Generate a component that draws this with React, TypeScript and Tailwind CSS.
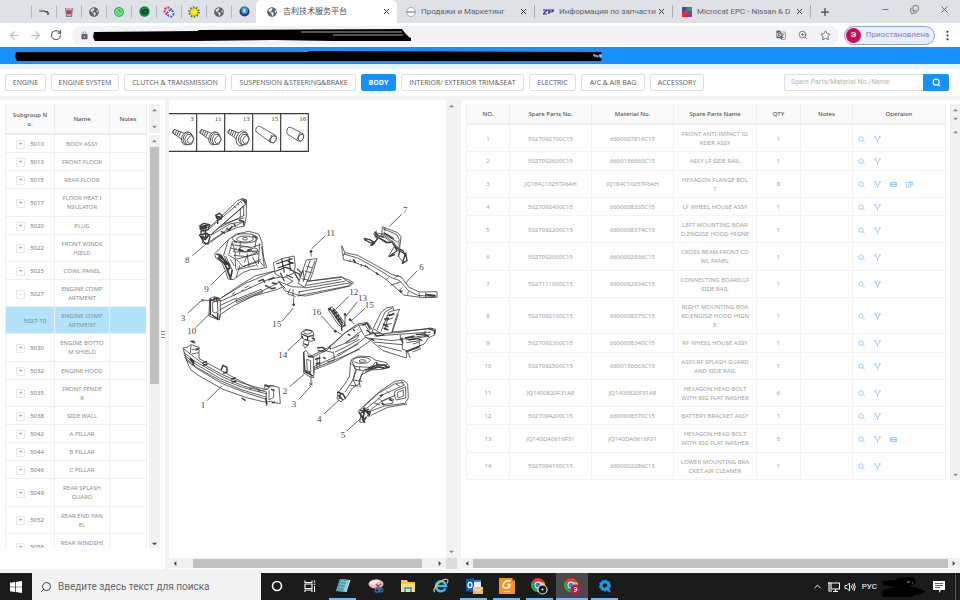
import React, { useState } from 'react';
import { ArrowLeft, ArrowRight, ChevronUp, Copy, EllipsisVertical, Minus, Plus, RotateCw, Search, Star, X, ZoomIn } from 'lucide-react';
import { FaGlobeAmericas, FaWhatsapp } from 'react-icons/fa';
import { MdLock, MdGTranslate } from 'react-icons/md';

interface Subgroup {
  no: string;
  name: string;
  open?: boolean;
  child?: boolean;
}

interface Part {
  partNo: string;
  materialNo: string;
  name: string;
  qty: number;
  actions: number;
}

const CATEGORIES = [
  { label: 'ENGINE', width: 'w-[41px]' },
  { label: 'ENGINE SYSTEM', width: 'w-[68px]' },
  { label: 'CLUTCH & TRANSMISSION', width: 'w-[102px]' },
  { label: 'SUSPENSION &STEERING&BRAKE', width: 'w-[125px]' },
  { label: 'BODY', width: 'w-[35px]' },
  { label: 'INTERIOR/ EXTERIOR TRIM&SEAT', width: 'w-[123px]' },
  { label: 'ELECTRIC', width: 'w-[47px]' },
  { label: 'A/C & AIR BAG', width: 'w-[64px]' },
  { label: 'ACCESSORY', width: 'w-[54px]' },
];

const SUBGROUPS: Subgroup[] = [
  { no: '5010', name: 'BODY ASSY' },
  { no: '5013', name: 'FRONT FLOOR' },
  { no: '5015', name: 'REAR FLOOR' },
  { no: '5017', name: 'FLOOR HEAT I\nNSULATOR' },
  { no: '5020', name: 'PLUG' },
  { no: '5022', name: 'FRONT WINDS\nHIELD' },
  { no: '5025', name: 'COWL PANEL' },
  { no: '5027', name: 'ENGINE COMP\nARTMENT', open: true },
  { no: '5027-10', name: 'ENGINE COMP\nARTMENT', child: true },
  { no: '5030', name: 'ENGINE BOTTO\nM SHIELD' },
  { no: '5032', name: 'ENGINE HOOD' },
  { no: '5035', name: 'FRONT FENDE\nR' },
  { no: '5038', name: 'SIDE WALL' },
  { no: '5042', name: 'A PILLAR' },
  { no: '5044', name: 'B PILLAR' },
  { no: '5046', name: 'C PILLAR' },
  { no: '5049', name: 'REAR SPLASH\nGUARD' },
  { no: '5052', name: 'REAR END PAN\nEL' },
  { no: '5058', name: 'REAR WINDSHI\nELD' },
];

const PARTS: Part[] = [
  { partNo: '5027092700C15', materialNo: '6600007816C15', name: 'FRONT ANTI-IMPACT GI\nRDER ASSY', qty: 1, actions: 2 },
  { partNo: '5027092600C15', materialNo: '6600156660C15', name: 'ASSY LF SIDE RAIL', qty: 1, actions: 2 },
  { partNo: 'JQ184C1025TF6AH', materialNo: 'JQ184C1025TF6AH', name: 'HEXAGON FLANGE BOL\nT', qty: 8, actions: 4 },
  { partNo: '5027092400C15', materialNo: '6600008335C15', name: 'LF WHEEL HOUSE ASSY', qty: 1, actions: 2 },
  { partNo: '5027092200C15', materialNo: '6600008374C15', name: 'LEFT MOUNTING BOAR\nD.ENGIGE HOOD HIGNE', qty: 1, actions: 2 },
  { partNo: '5027092000C15', materialNo: '6600002936C15', name: 'CROSS BEAM,FRONT CO\nWL PANEL', qty: 1, actions: 2 },
  { partNo: '5027111000C15', materialNo: '6600062934C15', name: 'CONNECTING BOARD,LF\nSIDE RAIL', qty: 1, actions: 2 },
  { partNo: '5027092100C15', materialNo: '6600008375C15', name: 'RIGHT MOUNTING BOA\nRD,ENGIGE HOOD HIGN\nE', qty: 1, actions: 2 },
  { partNo: '5027092300C15', materialNo: '6600008340C15', name: 'RF WHEEL HOUSE ASSY', qty: 1, actions: 2 },
  { partNo: '5027092500C15', materialNo: '6600156663C15', name: 'ASSY,RF SPLASH GUARD\nAND SIDE RAIL', qty: 1, actions: 2 },
  { partNo: 'JQ1400820F31A8', materialNo: 'JQ1400820F31A8', name: 'HEXAGON HEAD BOLT\nWITH BIG FLAT WASHER', qty: 6, actions: 2 },
  { partNo: '5027094200C15', materialNo: '6600008370C15', name: 'BATTERY BRACKET ASSY', qty: 1, actions: 2 },
  { partNo: 'JQ140DA0616F31', materialNo: 'JQ140DA0616F31', name: 'HEXAGON HEAD BOLT\nWITH BIG FLAT WASHER', qty: 5, actions: 3 },
  { partNo: '5027094100C15', materialNo: '6600002286C15', name: 'LOWER MOUNTING BRA\nCKET,AIR CLEANER', qty: 1, actions: 2 },
];

// ---------- Browser chrome ----------

const Globe = () => <FaGlobeAmericas className="size-[10px] text-[#5f6368]" />;

const PinnedIcons: React.ReactNode[] = [
  <svg viewBox="0 0 10 10" className="size-[10px]"><path d="M0 4h5l4 1v3" stroke="#333" strokeWidth="1" fill="none" /><path d="M6 5h3v3" stroke="#555" fill="none" /><path d="M0 3h3" stroke="#c99" /></svg>,
  <svg viewBox="0 0 10 10" className="size-[10px]"><path d="M1 1h8l-1 9H2z" fill="#8b7a86" /><path d="M2 1h6v2H2z" fill="#d9a0a0" /><path d="M3 4h4v3H3z" fill="#e22b3c" /><path d="M3 8h4" stroke="#ddd" /></svg>,
  <Globe />,
  <span className="flex size-[10px] items-center justify-center rounded-full bg-[#1fc24c]"><FaWhatsapp className="size-[8px] text-white" /></span>,
  <svg viewBox="0 0 12 12" className="size-[11px]"><circle cx="6" cy="6" r="5.600" fill="#0d8a43" /><path d="M3.500 4v4.500M5.500 4H7q2.300 0 2.300 2.200T7 8.500H5.500z" stroke="#0b3a20" strokeWidth="1.200" fill="none" /></svg>,
  <svg viewBox="0 0 12 12" className="size-[12px]"><circle cx="5" cy="5" r="3.400" fill="none" stroke="#d8304a" strokeWidth="2" strokeDasharray="2 1" /><circle cx="7.500" cy="7.500" r="3" fill="#fff" stroke="#3c5fc0" strokeWidth="2" strokeDasharray="2 1" /></svg>,
  <svg viewBox="0 0 12 12" className="size-[12px]"><circle cx="6" cy="6" r="4.800" fill="none" stroke="#6b6414" strokeWidth="1.800" strokeDasharray="1.500 1.500" /><circle cx="6" cy="6" r="3.800" fill="#f4ea16" stroke="#8f861a" strokeWidth=".6" /></svg>,
  <Globe />,
  <svg viewBox="0 0 12 12" className="size-[11px]"><circle cx="6" cy="6" r="5.500" fill="#1e4668" /><circle cx="6" cy="5" r="3.800" fill="#3c8fd0" /><path d="M4.500 3h2l1 1.500-1 1 1 1.500H4.500z" fill="#cfe6f7" /></svg>,
];

const TABS = [
  {
    title: 'Продажи и Маркетинг',
    icon: <svg viewBox="0 0 10 10" className="size-[10px]"><circle cx="5" cy="5" r="4.500" fill="#fff" stroke="#999" strokeWidth=".8" /><path d="M1 5h8M2 4v2M5 4v2M8 4v2" stroke="#777" strokeWidth=".8" /></svg>,
  },
  {
    title: 'Информация по запчасти',
    icon: <svg viewBox="0 0 11 8" className="h-[8px] w-[11px]"><path d="M0 2h4l-4 4h4M5 2h6L9 4H5M6 2v4" stroke="#2b2f86" strokeWidth="1.200" fill="none" /></svg>,
  },
  {
    title: 'Microcat EPC - Nissan & D',
    icon: <svg viewBox="0 0 10 10" className="size-[10px]"><path d="M0 0h5v5H0z" fill="#3454a0" /><path d="M5 0h5v4H5z" fill="#25a55a" /><path d="M0 5h5v5H0z" fill="#e02a45" /><path d="M5 4h5v6H5z" fill="#8b3a96" /><path d="M3 3h3v3H3z" fill="#b3475e" /></svg>,
  },
];

const TabStrip = () => (
  <div className="flex h-[23px] shrink-0 items-stretch bg-[#dee1e6] pl-[31px] font-['Roboto','Noto_Sans_CJK_SC',sans-serif]">
    {PinnedIcons.map((icon, i) => (
      <div key={i} className="flex w-[25px] items-center">
        <span className="h-[13px] w-px bg-[#b4b8be]" />
        <span className="flex flex-1 justify-center">{icon}</span>
      </div>
    ))}
    <div className="flex w-[141px] items-center rounded-t-md bg-white pr-1.5 pl-[11px]">
      <Globe />
      <span className="ml-1.5 flex-1 truncate text-[8px] text-[#45494d]">吉利技术服务平台</span>
      <button aria-label="Close tab"><X className="size-[9px] text-[#333]" strokeWidth={2.5} /></button>
    </div>
    {TABS.map(tab => (
      <div key={tab.title} className="flex w-[138px] items-center pl-2">
        <span className="flex w-[11px] shrink-0 justify-center">{tab.icon}</span>
        <span className="ml-[5px] w-[98px] overflow-hidden text-[8px] whitespace-nowrap text-[#5f6368]">{tab.title}</span>
        <button aria-label="Close tab" className="ml-auto"><X className="size-[9px] text-[#333]" strokeWidth={2.5} /></button>
        <span className="ml-1.5 h-[13px] w-px bg-[#a9adb3]" />
      </div>
    ))}
    <button aria-label="New tab" className="ml-2"><Plus className="size-[12px] text-[#444]" strokeWidth={2.5} /></button>
    <div className="ml-auto flex items-center gap-5 pr-2.5 pb-1 text-[#555]">
      <button aria-label="Minimize"><Minus className="size-[9px]" /></button>
      <button aria-label="Restore"><Copy className="size-[9px] -scale-y-100" /></button>
      <button aria-label="Close"><X className="size-[11px]" /></button>
    </div>
  </div>
);

const AddressBar = () => (
  <div className="flex h-[24px] shrink-0 items-center bg-white pl-[8px]">
    <button aria-label="Back"><ArrowLeft className="size-[13px] text-[#b5b8bb]" /></button>
    <button aria-label="Forward" className="ml-2"><ArrowRight className="size-[13px] text-[#b5b8bb]" /></button>
    <button aria-label="Reload" className="ml-2"><RotateCw className="size-[12px] text-[#5f6368]" strokeWidth={2.5} /></button>
    <div className="ml-2.5 flex h-[19px] flex-1 items-center rounded-full bg-[#f1f3f4] px-2">
      <MdLock className="size-[9px] text-[#5f6368]" />
      <svg viewBox="0 0 318 13" className="ml-1 h-[13px] w-[318px]">
        <path d="M1 3l104-1V1l204-1 3 4 1 1 3 3 2 1v3H240l-60-1-78 1H2L0 8z" fill="#000" />
        <path d="M208 3h101M240 6h70" stroke="#f1f3f4" strokeWidth=".7" />
      </svg>
      <div className="ml-auto flex items-center gap-3 text-[#5f6368]">
        <button aria-label="Translate"><MdGTranslate className="size-[10px]" /></button>
        <button aria-label="Zoom"><ZoomIn className="size-[10px]" /></button>
        <button aria-label="Bookmark"><Star className="size-[11px]" /></button>
      </div>
    </div>
    <button className="ml-[5px] flex h-[19px] w-[91px] items-center rounded-full border border-[#8f9fd0] bg-[#e8eefb] font-['Roboto',sans-serif] text-[8px] text-[#7386c4]">
      <span className="ml-px flex size-[15px] items-center justify-center rounded-full bg-[#c80f55] font-bold text-white">Э</span>
      <span className="flex-1 text-center">Приостановлена</span>
    </button>
    <button aria-label="Menu" className="mx-[6px]"><EllipsisVertical className="size-[13px] text-[#333]" /></button>
  </div>
);

// ---------- Scrollbars ----------

const ARROWS = {
  up: 'M0 4h6L3 1z',
  down: 'M0 2h6L3 5z',
  left: 'M4 0v6L1 3z',
  right: 'M2 0v6l3-3z',
};

const Arrow = ({ dir, tone = 'text-[#8a8a8a]' }: { dir: keyof typeof ARROWS; tone?: string }) => (
  <svg viewBox="0 0 6 6" className={`size-[5px] shrink-0 ${tone}`}>
    <path d={ARROWS[dir]} fill="currentColor" />
  </svg>
);

const HScroll = ({ thumb }: { thumb: string }) => (
  <div className="flex h-[10px] flex-1 items-center bg-[#f1f1f1] px-1">
    <Arrow dir="left" tone="text-[#444]" />
    <div className={`h-[9px] flex-1 bg-[#c1c1c1] ${thumb}`} />
    <Arrow dir="right" tone="text-[#444]" />
  </div>
);

// ---------- Subgroup tree ----------

const SubgroupPanel = () => {
  const [selected, setSelected] = useState('5027-10');

  return (
    <section className="flex w-[160px] shrink-0 bg-white pt-1 pb-[21px] pl-[5px]">
      <div className="flex-1 overflow-hidden">
        <table className="h-[457px] w-full table-fixed border-separate border-spacing-0 text-center font-['Noto_Sans',sans-serif] text-[6px] leading-[9px] text-[#777]">
          <colgroup>
            <col className="w-[50px]" />
            <col className="w-[55px]" />
            <col />
          </colgroup>
          <thead>
            <tr className="h-[31px] bg-[#fafafa] text-[#555]">
              <th className="border-r border-b-2 border-l border-[#ececec] pt-0.5 font-medium">Subgroup N<br />o.</th>
              <th className="border-r border-b-2 border-[#ececec] pt-0.5 font-medium">Name</th>
              <th className="border-r border-b-2 border-[#ececec] pt-0.5 font-medium">Notes</th>
            </tr>
          </thead>
          <tbody>
            {SUBGROUPS.map(row => (
              <tr key={row.no} onClick={() => setSelected(row.no)} className={row.no === selected ? 'bg-[#b3e2fd]' : 'bg-white'}>
                <td className="border-r border-b border-l border-[#efefef] pt-[5px] pb-[3px]">
                  {row.child ? (
                    <span className="ml-2.5">{row.no}</span>
                  ) : (
                    <span className="flex items-center justify-center gap-[5px]">
                      <button aria-label={`Toggle ${row.no}`} className="flex size-[9px] items-center justify-center rounded-[1px] border border-[#e8e8e8] text-[#777]">
                        {row.open ? '-' : '+'}
                      </button>
                      {row.no}
                    </span>
                  )}
                </td>
                <td className="border-r border-b border-[#efefef] pt-[5px] pb-[3px] whitespace-pre text-[#8c8c8c]">{row.name}</td>
                <td className="border-r border-b border-[#efefef]" />
              </tr>
            ))}
          </tbody>
        </table>
      </div>
      <div className="ml-0.5 flex w-[11px] flex-col items-center">
        <div className="flex h-[29px] w-full flex-col items-center justify-between bg-[#f1f1f1] py-1">
          <Arrow dir="up" />
          <Arrow dir="down" />
        </div>
        <div className="mt-0.5 flex w-full flex-1 flex-col items-center bg-[#f1f1f1] pt-1 pb-0.5">
          <Arrow dir="up" />
          <div className="mt-[3px] h-[237px] w-[9px] bg-[#c1c1c1]" />
          <div className="mt-auto"><Arrow dir="down" tone="text-[#444]" /></div>
        </div>
      </div>
    </section>
  );
};

// ---------- Exploded view ----------

const LABELS: [string, number, number][] = [
  ['3', 76, 63], ['11', 149, 63], ['13', 233, 63], ['15', 319, 63], ['16', 403, 63],
  ['8', 60, 490], ['7', 714, 340], ['11', 484, 408], ['6', 763, 510], ['9', 118, 575],
  ['3', 47, 663], ['10', 67, 701], ['15', 322, 682], ['12', 553, 586], ['13', 579, 603],
  ['15', 599, 625], ['16', 442, 646], ['14', 340, 775], ['1', 107, 923], ['2', 353, 882],
  ['3', 380, 920], ['4', 456, 965], ['5', 527, 1015],
];

const Bolt = ({ x, washer }: { x: number; washer?: boolean }) => (
  <g transform={`translate(${x} 0)`}>
    <path d="M6 97l7-9 42 17-8 22z" />
    <path d="M13 88l-4 12m11-9l-6 14m12-12l-6 14m12-11l-6 14" strokeWidth="2.600" />
    <ellipse cx="50" cy="115" rx={washer ? 17 : 15} ry={washer ? 23 : 20} transform="rotate(20 50 115)" />
    <ellipse cx="53" cy="115" rx="13" ry="18" transform="rotate(20 53 115)" />
    <path d="M44 117l8-14 14 1 6 13-8 16-15 1z" />
    <path d="M57 111l8-5 6 11-5 12-10 1-5-9z" />
  </g>
);

const PartsDrawing = () => (
  <svg viewBox="12 0 831 1374" className="h-[458px] w-[277px]" fill="none" stroke="#3a3a3a" strokeWidth="2.400" strokeLinejoin="round">
    {/* fastener strip */}
    <path d="M12 41h418v113H12M95 41v113M179 41v113M263 41v113M347 41v113" strokeWidth="3.500" />
    <g fill="#fff">
      <Bolt x={15} />
      <Bolt x={97} />
      <Bolt x={181} washer />
      <path d="M275 82q4-6 12-2l46 27q5 6-1 15t-14 6l-44-32q-5-5 1-14zM321 104l-9 21M326 105l-9 21" />
      <ellipse cx="325" cy="118" rx="8" ry="11" transform="rotate(25 325 118)" />
      <path d="M368 84q4-5 11-1l35 18q5 5 0 15t-14 7l-32-20q-6-6 0-19zM404 99l-8 20M409 101l-8 20" />
      <ellipse cx="408" cy="113" rx="7" ry="11" transform="rotate(25 408 113)" />
    </g>

    {/* 8: left hinge mounting board */}
    <g>
      <path d="M232 296l12 3v50l-6 30-20 3-44 18-44 31-18-2 2-23 14-18z" fill="#fff" />
      <path d="M218 302l14-6 12 6-2 12-104 90-20-2-2-14 24-12z" fill="#fff" />
      <path d="M230 302L126 392M242 312L140 402M160 384l78-38M226 326v26M236 320v28M176 372l40-14 22-4M138 406l56-34 42-8M134 425l50-34 52-26M206 318l8 6M217 310l6 6M226 304l6 6" />
      <path d="M104 378l12-8 18 4-4 15-20 4zM108 393v20l14 7M122 388v32M103 405l24-5 8 10-6 22-10-3zM152 346l12-6 8 8-4 10-12-2zM158 358v14M231 299l10 6M184 384l8 8 10-14M168 394l12 6M206 370l6 10M222 360l14 4v12" strokeWidth="4" />
      <path d="M106 381l24-6M104 388l22-6M108 410l14 4M123 415l8-10M153 349l14 4M238 302l4 8" strokeWidth="6" />
    </g>

    {/* 9: left wheel house */}
    <g>
      <path d="M149 461l40-41 26-18 36-8 30 8 9 22 6 48 9 30-22 5-26 2-22 8-30 22-16-2-8-26-12-26-16-10z" fill="#fff" />
      <ellipse cx="240" cy="415" rx="38" ry="14" />
      <ellipse cx="240" cy="417" rx="25" ry="9" />
      <ellipse cx="240" cy="416" rx="8" ry="4" />
      <ellipse cx="240" cy="448" rx="18" ry="8" />
      <ellipse cx="268" cy="450" rx="10" ry="6" />
      <path d="M190 420l-14 46 18 38M202 424l-10 38M202 428l8 28 66-3M210 456l2 50M188 464l24 14 70-18M216 480l18 20 54-22M234 500l50-16 12 14M246 460l6 40M262 470l16 30M224 496l-10 36M284 430l-4 62M274 412l-4 30M226 424l-2 40M238 488l8-22M216 442l-12 14M290 440l8 60M212 510l30-14M182 468l20 42M200 434l60 8 26-8M196 444l30 8M206 466l40 4 36-16M196 478l12 20M222 508l50-12" />
      <path d="M154 462l14 4 12 20 10 6M158 472l20 18 12 24M162 468l30 24M176 490l16 4 2 12-10 2M202 510l-6 26M186 508l12 30M220 448l16 5M246 452l10-3M216 426l-10-2M262 408l14 6" strokeWidth="5" />
    </g>

    {/* 7: connecting board */}
    <g>
      <path d="M652 380l46 18 10 12-4 34-16-10-26-20-12-4z" fill="#fff" />
      <path d="M654 386l42 18 6 14v20M660 394v-12M652 400l46 26M632 398l18 4 36 24 10 20 20 14M634 408l40 22M636 392l-10 8 8 16M640 416l-26 22M688 440l-18 30M698 452l20 8M700 468l16 22" />
      <path d="M596 415l18 4 14 8-10 2-20-10M628 395l12 12 16 4M630 402l8 14-16 20M616 436l14-6M656 398l30 18M640 412l24 16 20-2M684 430l12 22-24 18M692 442l22 10 6 14-8 24 14-8-4-24M706 446l-6 24M672 470l18-6" strokeWidth="4" />
    </g>

    {/* 6: front cowl cross beam */}
    <g>
      <path d="M530 437l10 21 38 8 44 24 60 34 26 6 24 32 32 14 52-1v17l-44 1-56-8-38-34-14-12-58-38-38-14-32-8-4-22z" fill="#fff" />
      <path d="M536 462l42 12 48 26 52 32 26 10 26 30 28 14 54 4M555 478v8M606 498l4 10M590 492l-2 8M634 516l4 8M664 538l8-5M676 556l30-10M702 572l10-10M728 584l2-10M762 578l2 14M782 578v16M540 458l-6 10M690 532l12-6" />
      <path d="M564 478l8 10M600 500l4-3M634 520l6 4M704 572l8 4M782 584l30 3" strokeWidth="5" />
    </g>

    {/* 10: left side rail */}
    <g transform="translate(0 510)">
      <path d="M134 86l14-6 18 6 52-36 52-32 54-14 34 14 26 16-46 24-72 20-62 30-38 26-4 16-30-12z" fill="#fff" />
      <path d="M143 96l14-3 2 32-8 4-8-4zM134 86l14 8 18-2M148 81v12M166 90v40l-3 20M166 94l80-36 60-28 44-10M164 120l50-28 80-30 50-26M166 106l48-22M213 88l76-30 4 8-78 31zM168 84l74-44 90-38M200 74l10-8M204 78l10-7M240 54l12-7M250 56l8-6M228 64l10-6" />
      <path d="M138 92l18-9 8 8M140 134l20 14M152 86l6 8M136 88v48M158 128v20M280 34l14-6 6 10M310 30l18-8M320 38l16 4M300 46l20 10 12-3" strokeWidth="4.500" />
      <path d="M325-22l26-12 36-8 4 30-6 22-32 14-22-12z" fill="#fff" />
      <path d="M333-18l50-16M338-6l46-16M332 4l30-12 18 6M350-34l8 42M372-38l4 40M346 8l12 26M364 14l20 10M368-26l18 6M378 0l24 12M396-4l30 30M388 8l18 30M402 10l16 36" strokeWidth="3.500" />
      <path d="M400 40l24-70 12-2 20-2-12 40-16 44-6 4z" fill="#fff" />
      <path d="M414 36l22-66M426 38l24-66M410 26l20 4M420 4l20 4M424-12l18 6M404 20l10-20 4 30" />
      <path d="M340 34l40 16 40 2 6-18 104-12 22 8 14 8-10 10-54 12-80 18-22-2-40-14z" fill="#fff" />
      <path d="M400 66l158-28M404 76l146-28M426 34l104-14 12 10M424 46l106-18M420 54l120-20M376 56l-8 16 24 8M384 58v20M404 64l-4 16M344 38l18 18M540 30l20 10-12 8" />
      <path d="M438-40v-16M434-56h8M386 82v20" />
      <circle cx="438" cy="-56" r="3" fill="#333" />
      <circle cx="386" cy="104" r="3" fill="#333" />
      <path d="M112 91h22M108 87l7 8M115 87l-7 8" />
    </g>

    <g transform="translate(0 510)">
      {/* 1: anti-impact girder */}
      <path d="M54 234l12-2 12-8 24 8v34l34 18 40 22 44 24 44 22 26 10 20-6 4-10 28 6 4 48-22-2-4-4-22 2-50-12-74-26-74-42-22-16-10-20z" fill="#fff" />
      <path d="M56 236l30 24 32 24 50 28 60 26 54 16 26 4M55 246l32 26 84 48 64 28 70 18M56 254l36 28 74 44 66 26 74 20M58 262l40 32 68 38 66 28 74 22M62 270l38 28 70 42 66 26 68 22M78 226l-2 24M80 240l24-6M80 252l22-4M76 214l10-2 4 8M304 366v42M312 360v30l14-8v-26M298 354l4-10 14 6 10-4" />
      <path d="M78 214l12 4M76 264l10 10-2 12M92 240l8-3M112 280l14-6M114 286l14-4M168 300l6-14 12 6v14l-12 4M198 328l14-5M200 336l14-3M230 384l12 8M254 356l4 2M280 362l4 2M298 345l16 6M318 358l10 4M320 398l10-2M302 384l4 20M74 268l14 14" strokeWidth="4.500" />

      {/* 14: air cleaner bracket */}
      <path d="M408 188l14-10 20 4 4 10-2 14 6 4-10 4-8-2-2 14-10 8-6-10 4-16-8-6z" fill="#fff" />
      <ellipse cx="428" cy="186" rx="12" ry="6" />
      <path d="M410 192l18 8 18-4M428 200v12M420 208l10 4M418 222l12 4M440 204l10 4M412 198v8" strokeWidth="4" />

      {/* 12: battery bracket with bolts */}
      <path d="M490 116l10-5 10 8 28 38 2 10-8 5-12-8-30-44z" fill="#fff" />
      <path d="M494 114l34 50M500 124l10-5M504 132l12-6M510 142l12-6M516 150l12-4M504 118l30 44M490 116l10 6M530 162v20M534 168l8-2" strokeWidth="4.500" />
      <path d="M540 134v30M555 149l14 14M512 182l18 12" />
      <circle cx="540" cy="133" r="3" fill="#333" />
      <circle cx="555" cy="149" r="3" fill="#333" />
      <circle cx="511" cy="184" r="3" fill="#333" />

      {/* 2: right splash guard and side rail */}
      <path d="M416 246l8-4 8 12 14 6 40-20 54-52 38-26 30-5 16 26-36 30-60 40-80 36-2 34-10-2-20-12z" fill="#fff" />
      <path d="M425 268l12 4v34l-10-4zM446 260v50M456 262v32M464 256v32M450 294l54-22 80-34M446 300l66-26 70-38 34-24M430 262l58-28 56-48 36-20 22-4M480 242l26 6 2 22-22 6M500 236l40-16 50-38M510 246l30-14 44-24M516 254l64-32M544 216l38-22-8 14-30 12zM580 164l16 30M596 160l18 24" />
      <path d="M416 246l4 60 24 12M428 258l16 4M420 300l10 8M456 234l18-2 8 8M458 242l22 2M450 268l16-4M452 282l14-5M474 262l8 4M492 230l6 8M548 192l8 5M564 178l6 5M592 166l14-6 10 18M604 180l16 12M432 304l8 14" strokeWidth="4" />
      <path d="M598 198l28-8 72-2 98-14 16 4-2 16-20 10-12 18-52 20-2 22-70-22-36-30z" fill="#fff" />
      <path d="M624 190l180-14M628 198l170-12M604 204l80 8 110-18M626 216l86 8M640 226l70 18M712 202v36l14 4 10 22M722 210l70-12M724 218l40-6v20l-36 12M744 222l20-6M706 194v18M780 182v20M742 246l26-10" />
      <path d="M622 186l14 12 22-4M720 204l28-6M730 210l30-4 12 6M752 194l26-2 14 8M790 176l18 6v10M708 204l6 16M722 246l40-16M616 206l12 6" strokeWidth="4" />
      <path d="M624 176l24-48 16-14 20-4 2 12 18-4-10 22-14 48-28 4z" fill="#fff" />
      <path d="M636 180l24-54 22-12M648 184l24-58 14-4M660 152l24-8M654 166l26-6M682 186l18-54M664 138l24-8M668 146l-8 34" />
      <path d="M658 148l14-4M654 162l16 8M672 136l16-4M656 174l14 6" strokeWidth="5" />

      {/* 4: right wheel house */}
      <path d="M556 280l4-12 22-10 34 2 14 10 34 8 10 12-24 8-32 2-28 14-8 28-20 12-16 26-18 16-12-10 2-16 20-26 16-26z" fill="#fff" />
      <ellipse cx="590" cy="271" rx="26" ry="9" />
      <ellipse cx="592" cy="273" rx="10" ry="4" />
      <path d="M556 280l14 10 50 2 12-16M560 272l12 26-8 32-24 36M572 298l24 4M566 330l26 4M556 346l24 2M574 300l-10 30 10 18M596 302l-14 30 4 20M600 306l60-22M584 290v12M566 284l4 14" />
      <path d="M516 366l18 6 8 14M520 376l14 14M598 300l40-8M610 294l30-10 26 2M650 284l22 8-20 4M634 276l4 10M528 368l-6 18M634 290l24 4" strokeWidth="4.500" />

      {/* 5: right hinge mounting board */}
      <path d="M580 424l16-16 48-44 46-30 24-4 14 12 2 42-10 16-62 8-42 16-22 34-10-2 4-22z" fill="#fff" />
      <path d="M594 412l46-42 52-30 24-2M604 416l54-44 62-28M616 420l36-28 40-16M690 364l32-14v34l-28 6-6-14zM697 368l18-8v18l-16 6zM652 394l20-10 14 4-4 12-30 4zM618 436l50-24 58-10M640 384l10 8M664 362l8 8M692 342l12 6M710 334l6 12M626 398l20 8" />
      <path d="M584 420l30 6M588 428l24-10M594 414l20 22M600 412l-6 34M582 426l14 22 8-6M592 446l8 12M616 422l-4 18M644 378l10-4M650 400l8 4M672 388l10 4" strokeWidth="5" />
      <path d="M438 318v26M433 340l10 6M433 347l10-8" />
    </g>

    {/* leader lines */}
    <path d="M82 467l46-39M710 343l-38 37M480 408l-40 38M757 512l-36 38M138 555l42-42M68 640l40-37M92 683l41-41M350 665l35-41M551 590l-39 38M577 605l-35 45M600 625l-42 38M470 648l41 46M368 752l40-37M126 902l44-44M374 860l44-38M402 898l36-40M477 942l45-42M545 993l45-40" />

    <g fill="#444" stroke="none" fontFamily="'Liberation Serif', serif">
      {LABELS.map(([text, x, y], i) => (
        <text key={i} x={x} y={y} fontSize={i < 5 ? 21 : 27}>{text}</text>
      ))}
    </g>
  </svg>
);

const DrawingPanel = () => (
  <section className="flex w-[288px] shrink-0 flex-col bg-white">
    <div className="flex flex-1 overflow-hidden">
      <div className="flex-1 overflow-hidden"><PartsDrawing /></div>
      <div className="flex w-[11px] flex-col items-center justify-between bg-[#f1f2f2] py-1">
        <Arrow dir="up" />
        <Arrow dir="down" />
      </div>
    </div>
    <div className="flex h-[11px]">
      <HScroll thumb="mr-[15px] ml-[15px]" />
      <div className="w-[11px] bg-[#dcdcdc]" />
    </div>
  </section>
);

// ---------- Parts table ----------

const ACTIONS = [
  { label: 'Search', art: <><circle cx="3" cy="3" r="2.200" /><path d="M4.700 4.700l2 1.600" /></> },
  { label: 'Fork', art: <><circle cx="1.300" cy="1" r=".7" /><circle cx="5.700" cy="1" r=".7" /><path d="M1.500 1.700L3.500 5l2-3.300M3.500 4.500V7" /></> },
  { label: 'Bind', art: <path d="M.5 1.500h6v4h-6zM2 1.500v4M5 1.500v4M1 3.500h5" /> },
  { label: 'Copy', art: <path d="M.5 1.500h4.500v4.500H.5zM2.500 1h4v3M5 3H3v2" /> },
];

const PartsPanel = () => (
  <section className="flex min-w-0 flex-1 flex-col bg-white pt-1">
    <div className="flex flex-1 pl-[5px]">
      <div className="flex-1 pr-1">
        <table className="h-[376px] w-full table-fixed border-separate border-spacing-0 text-center font-['Noto_Sans',sans-serif] text-[6px] leading-[9px] text-[#a0a0a0]">
          <colgroup>
            <col className="w-[44px]" />
            <col className="w-[82px]" />
            <col className="w-[82px]" />
            <col className="w-[83px]" />
            <col className="w-[44px]" />
            <col className="w-[52px]" />
            <col />
          </colgroup>
          <thead>
            <tr className="h-[21px] bg-[#fafafa] text-[#555]">
              {['NO.', 'Spare Parts No.', 'Material No.', 'Spare Parts Name', 'QTY', 'Notes', 'Operaion'].map(title => (
                <th key={title} className="border-r border-b-2 border-[#eeeeee] pt-0.5 font-medium first:border-l">{title}</th>
              ))}
            </tr>
          </thead>
          <tbody>
            {PARTS.map((part, i) => (
              <tr key={part.partNo}>
                <td className="border-r border-b border-l border-[#f3f3f3] pt-[5px] pb-[3px]">{i + 1}</td>
                <td className="border-r border-b border-[#f3f3f3] pt-[5px] pb-[3px]">{part.partNo}</td>
                <td className="border-r border-b border-[#f3f3f3] pt-[5px] pb-[3px]">{part.materialNo}</td>
                <td className="border-r border-b border-[#f3f3f3] pt-[5px] pb-[3px] whitespace-pre">{part.name}</td>
                <td className="border-r border-b border-[#f3f3f3] pt-[5px] pb-[3px]">{part.qty}</td>
                <td className="border-r border-b border-[#f3f3f3]" />
                <td className="border-r border-b border-[#f3f3f3] pt-[5px] pb-[3px]">
                  <div className="flex gap-[9px] pl-[5px]">
                    {ACTIONS.slice(0, part.actions).map(action => (
                      <button key={action.label} aria-label={action.label} className="text-[#86c3fb]">
                        <svg viewBox="0 0 7 7" className="size-[7px]" fill="none" stroke="currentColor" strokeWidth=".8">{action.art}</svg>
                      </button>
                    ))}
                  </div>
                </td>
              </tr>
            ))}
          </tbody>
        </table>
      </div>
      <div className="flex h-[376px] w-[10px] flex-col items-center bg-[#f1f1f1]">
        <div className="flex h-[21px] flex-col justify-center gap-[3px]">
          <Arrow dir="up" />
          <Arrow dir="down" />
        </div>
        <div className="mt-[5px]"><Arrow dir="up" /></div>
        <div className="mt-auto mb-[3px]"><Arrow dir="down" /></div>
      </div>
    </div>
    <div className="flex h-[11px]">
      <HScroll thumb="mx-[3px]" />
    </div>
  </section>
);

// ---------- Taskbar ----------

const Chrome = ({ children }: { children: React.ReactNode }) => (
  <svg viewBox="0 0 18 18" className="size-[18px]">
    <circle cx="8" cy="8" r="7" fill="#e23b30" />
    <path d="M8 8L2 4.500A7 7 0 0 0 8 15z" fill="#2ca24c" />
    <path d="M8 15a7 7 0 0 0 6.500-9.500H8z" fill="#f7c82a" />
    <circle cx="8" cy="8" r="3.400" fill="#fff" />
    <circle cx="8" cy="8" r="2.600" fill="#3b7de0" />
    {children}
  </svg>
);

const APPS: { name: string; running?: boolean; active?: boolean; icon: React.ReactNode }[] = [
  { name: 'Cortana', icon: <svg viewBox="0 0 12 12" className="size-[12px]"><circle cx="6" cy="6" r="4.500" fill="none" stroke="#fff" strokeWidth="1.600" /></svg> },
  { name: 'Task view', icon: <svg viewBox="0 0 12 12" className="size-[12px]" fill="none" stroke="#fff" strokeWidth="1.100"><path d="M1 4h7v4.500H1zM1 .5v2h7v-2M1 12v-2h7v2M10.500 .5v2M10.500 6v6M9.500 4.200h2" /></svg> },
  { name: 'Notepad', running: true, icon: <svg viewBox="0 0 16 16" className="size-[16px]"><path d="M5 1l10 1-4 12-10-1z" fill="#8fc3cf" /><path d="M5 1l7 .7L8 13.500 1 13z" fill="#4fa1b4" /><path d="M6 3l7 1M5 6l7 1M4 9l7 1" stroke="#a4d4dc" strokeWidth=".6" /><path d="M15 2l-4 12" stroke="#e8e8e8" /></svg> },
  { name: 'Snipping tool', icon: <svg viewBox="0 0 16 16" className="size-[16px]"><ellipse cx="8" cy="6" rx="7.500" ry="4.500" fill="#e8b9c0" /><path d="M1 6q3-5 11-4L7 7z" fill="#f7e9ea" /><path d="M8 6l5 6M13 6l-6 5" stroke="#cf3346" strokeWidth="1.200" /><circle cx="13" cy="12" r="1.800" fill="none" stroke="#2870b8" strokeWidth="1.400" /><circle cx="9" cy="12.500" r="1.800" fill="none" stroke="#2870b8" strokeWidth="1.400" /></svg> },
  { name: 'Explorer', icon: <svg viewBox="0 0 16 14" className="h-[14px] w-[16px]"><path d="M1 1h6l1 2h7v10H1z" fill="#f0c445" /><path d="M1 5h14v8H1z" fill="#fbdc79" /><path d="M4 8h8v5H10v-3H6v3H4z" fill="#4ba3dd" /></svg> },
  { name: 'Internet Explorer', icon: <svg viewBox="0 0 16 16" className="size-[16px]" fill="none"><path d="M12.500 10.500A5 5 0 1 1 13 8H4" stroke="#40bdf0" strokeWidth="2.600" /><path d="M2 14Q-1 13 4 7T14 1.500q2 .5 0 4" stroke="#f3c63a" strokeWidth="1.200" /></svg> },
  { name: 'Outlook', running: true, icon: <svg viewBox="0 0 18 16" className="h-[16px] w-[18px]"><path d="M7 2h9v9H7z" fill="#2d8ae0" /><path d="M8 4h8v5H8z" fill="#e9f3fc" /><path d="M1 1l8-1v14l-8-1z" fill="#0b5cad" /><ellipse cx="5" cy="7" rx="2" ry="2.700" fill="none" stroke="#fff" strokeWidth="1.300" /><path d="M8 9h10v7H8z" fill="#f3b96a" /><path d="M8 9l5 4 5-4" stroke="#fff2d8" fill="none" /></svg> },
  { name: 'PDF', running: true, icon: <svg viewBox="0 0 16 16" className="size-[16px]"><path d="M0 0h13l3 3v13H0z" fill="#f29222" /><path d="M13 0v3h3" fill="#a55c10" /><path d="M11.500 3q-5.500-1-7 3T7 10t4-3.500H8" stroke="#fff" strokeWidth="1.500" fill="none" /><path d="M5 13.500h6" stroke="#fce0ba" strokeWidth="1.200" /></svg> },
  { name: 'Chrome', running: true, icon: <Chrome><circle cx="12.500" cy="12.500" r="4.500" fill="#181818" stroke="#ddd" strokeWidth="1.200" /><circle cx="12.500" cy="12.500" r="1" fill="#fff" /></Chrome> },
  { name: 'Chrome profile', running: true, active: true, icon: <Chrome><circle cx="12.500" cy="12.500" r="5" fill="#cb1256" /><path d="M11 10.800q3-1 3 1.700t-3 1.700M11.500 12.500H14" stroke="#fff" strokeWidth=".9" fill="none" /></Chrome> },
  { name: 'Settings', running: true, icon: <svg viewBox="0 0 14 14" className="size-[14px]"><circle cx="7" cy="6.500" r="3.800" fill="none" stroke="#1b9de8" strokeWidth="3" /><circle cx="7" cy="6.500" r="5.300" fill="none" stroke="#1b8ad6" strokeWidth="1.500" strokeDasharray="2 1.500" /><path d="M8 8l4 5" stroke="#1b9de8" strokeWidth="2" /></svg> },
];

const Taskbar = () => (
  <footer className="flex h-[27px] shrink-0 bg-[#1b1b1b] font-['Roboto',sans-serif] text-white">
    <button aria-label="Start" className="flex w-[32px] items-center justify-center">
      <svg viewBox="0 0 12 12" className="size-[12px]" fill="#fff"><path d="M0 1.800l5-.8v4.700H0zM5.700.9L12 0v5.700H5.700zM0 6.300h5V11l-5-.8zM5.700 6.300H12V12l-6.300-.9z" /></svg>
    </button>
    <label className="flex w-[229px] items-center bg-[#f2f2f2] pl-2">
      <Search className="size-[12px] -scale-x-100 text-[#444]" strokeWidth={2} />
      <input aria-label="Поиск" placeholder="Введите здесь текст для поиска" className="ml-1.5 min-w-0 flex-1 bg-transparent text-[10px] text-[#333] outline-none placeholder:text-[#666]" />
    </label>
    <div className="flex w-[360px]">
      {APPS.map(app => (
        <button key={app.name} aria-label={app.name} className={`flex flex-1 flex-col items-center ${app.active ? 'bg-[#4a4a4a]' : ''}`}>
          <span className="flex flex-1 items-center">{app.icon}</span>
          <span className={`h-[2px] ${app.active ? 'w-full' : 'w-[27px]'} ${app.running ? 'bg-[#76b9ed]' : ''}`} />
        </button>
      ))}
    </div>
    <div className="ml-auto flex items-center pr-1">
      <ChevronUp className="size-[11px]" />
      <svg viewBox="0 0 12 12" className="ml-[5px] size-[12px]" fill="none" stroke="#fff" strokeWidth="1.100"><path d="M3 2h8.500v6H3zM5 10.500h5M7.500 8v2.500M1 1v5M0 2h2.500M1 6v4h3" /></svg>
      <svg viewBox="0 0 12 12" className="ml-1 size-[12px]" fill="none" stroke="#fff" strokeWidth=".9"><path d="M1 4.500h2L5.500 2v8L3 7.500H1zM7 4.500q1 1.500 0 3M8.500 3q2 3 0 6M10 2q2.500 4 0 8" /></svg>
      <span className="ml-[6px] text-[8px]">РУС</span>
      <svg viewBox="0 0 46 20" className="ml-1 h-[20px] w-[46px]"><path d="M1 4l14-1 2-2 15-1 3 3-1 4-6 2 8 2 9 3-4 3-7 1-4 2H1l1-7 12-3L2 8z" fill="#000" /><path d="M26 5h3M31 6h1" stroke="#bbb" strokeWidth=".8" /></svg>
      <svg viewBox="0 0 12 12" className="ml-[6px] size-[12px]"><path d="M0 0h12v9H8l-2 3V9H0z" fill="#fff" /><path d="M2 2.500h8M2 4.500h8M2 6.500h5" stroke="#333" strokeWidth=".8" /></svg>
      <span className="ml-2.5 h-[27px] w-px bg-[#555]" />
    </div>
  </footer>
);

const App: React.FC = () => {
  const [category, setCategory] = useState('BODY');

  return (
    <div className="flex h-screen flex-col overflow-hidden bg-[#f1f3f5] font-['Open_Sans','Noto_Sans_CJK_SC',sans-serif]">
      <TabStrip />
      <AddressBar />

      {/* Site header */}
      <header className="h-[17px] shrink-0 bg-[#1890ff] pt-1 pl-[15px]">
        <svg viewBox="0 0 588 10" className="h-[10px] w-[588px]">
          <path d="M1 1h292l1-1 292 1 1 2-5 2 5 3-1 2H2L0 6z" fill="#000" />
          <path d="M578 4h2v2M582 4v2.500M584 4h2v2" stroke="#cfe6ff" strokeWidth="1.200" fill="none" />
        </svg>
      </header>

      {/* Categories and search */}
      <nav className="flex h-[32px] shrink-0 items-center gap-[5px] border-t-[5px] border-[#e8f4ff] bg-white pr-[11px] pl-[5px]">
        {CATEGORIES.map(({ label, width }) => (
          <button
            key={label}
            onClick={() => setCategory(label)}
            className={`h-[17px] shrink-0 rounded-[2px] border text-[7px] leading-[9px] whitespace-nowrap ${width} ${
              category === label
                ? 'border-[#1890ff] bg-[#1890ff] font-bold text-white'
                : 'border-[#dfdfdf] bg-white font-medium text-[#555]'
            }`}
          >
            {label}
          </button>
        ))}
        <form className="ml-auto flex h-[17px] w-[165px]" onSubmit={e => e.preventDefault()}>
          <input aria-label="Spare parts search" placeholder="Spare Parts/Material No./Name" className="min-w-0 flex-1 rounded-l-[2px] border border-r-0 border-[#dfdfdf] px-1.5 font-['Roboto',sans-serif] text-[7px] outline-none placeholder:text-[#b5b5b5]" />
          <button aria-label="Search" className="flex w-[26px] items-center justify-center rounded-r-[2px] bg-[#1890ff] text-white">
            <Search className="size-[9px]" strokeWidth={3} />
          </button>
        </form>
      </nav>

      <main className="mt-1 mb-1 flex min-h-0 flex-1">
        <SubgroupPanel />
        <div className="flex w-[9px] shrink-0 flex-col items-center justify-center gap-0.5 border-r-4 border-[#f1f3f5] bg-white">
          <span className="h-px w-[4px] bg-[#888]" />
          <span className="h-px w-[4px] bg-[#888]" />
          <span className="h-px w-[4px] bg-[#888]" />
        </div>
        <DrawingPanel />
        <div className="w-1 shrink-0" />
        <PartsPanel />
      </main>

      <Taskbar />
    </div>
  );
};

export default App;
